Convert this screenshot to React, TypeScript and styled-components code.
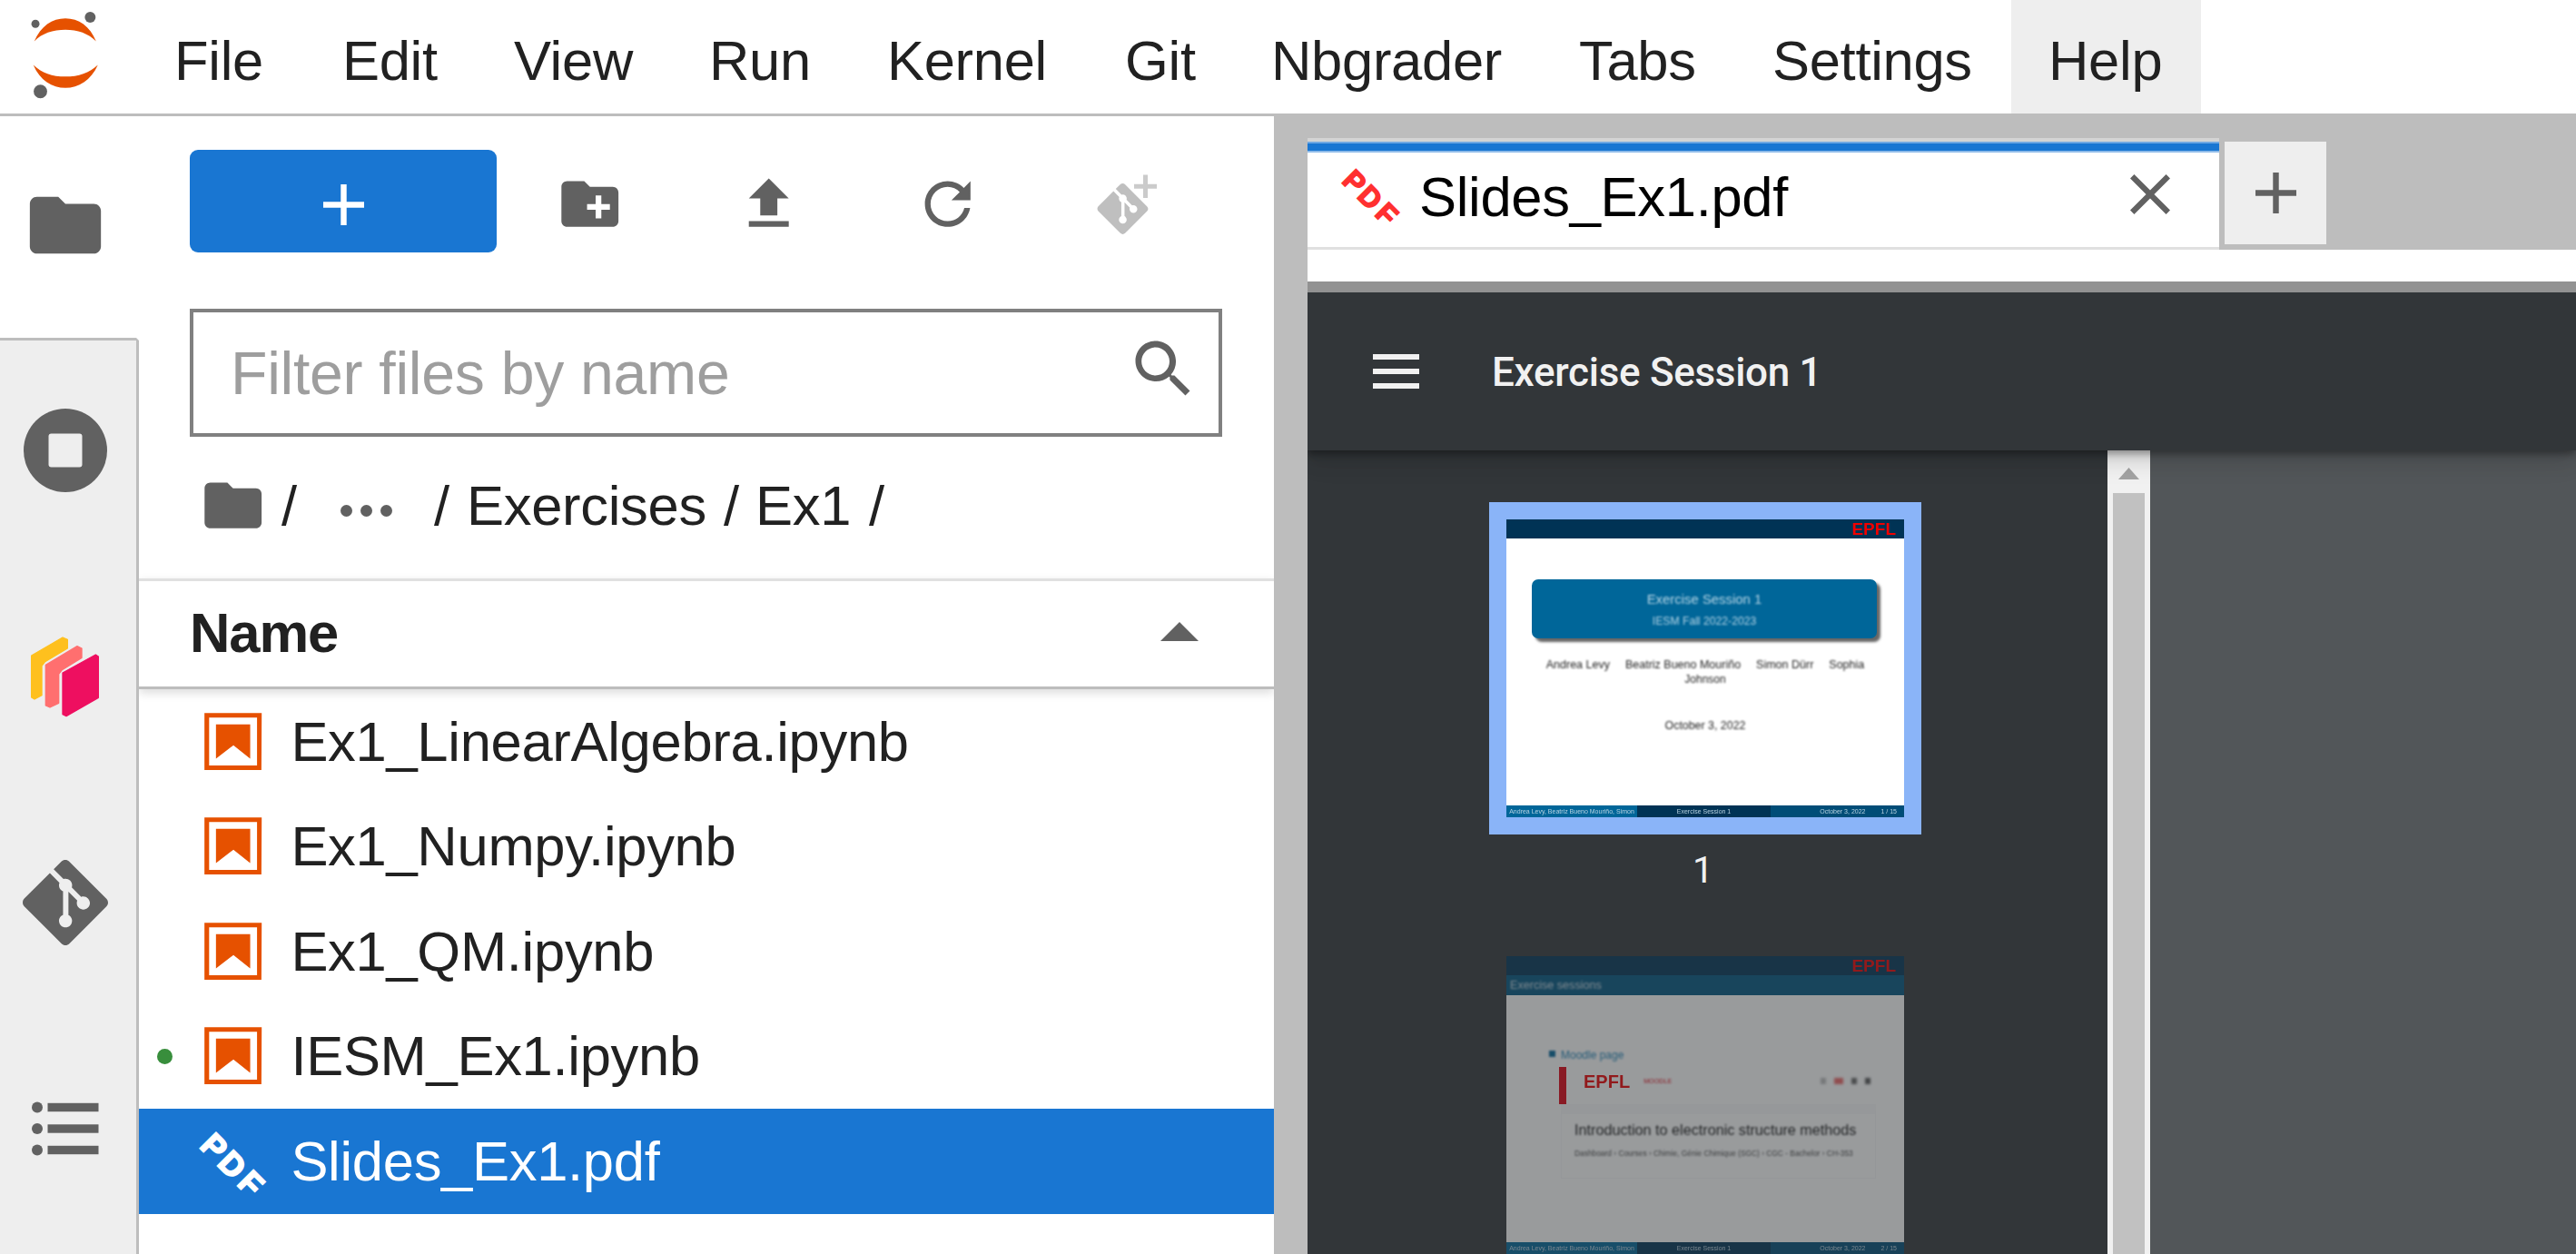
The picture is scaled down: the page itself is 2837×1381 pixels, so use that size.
import React from "react";
import styled, { createGlobalStyle, css } from "styled-components";

const GlobalStyle = createGlobalStyle`
  * { box-sizing: border-box; }
  html, body { margin: 0; padding: 0; overflow: hidden; background: #fff; }
`;

const ink = "#212121";
const iconGrey = "#616161";
const brand = "#1976d2";
const edge = "#bdbdbd";
const orange = "#e65100";

const Shell = styled.div`
  width: 2837px;
  height: 1381px;
  overflow: hidden;
  display: flex;
  flex-direction: column;
  background: #fff;
  color: ${ink};
  font-family: "Liberation Sans", Arial, sans-serif;
  font-size: 61.5px;
  letter-spacing: -0.3px;
  line-height: 1;
  white-space: nowrap;
`;

/* ---------- menu bar ---------- */

const MenuBar = styled.header`
  display: flex;
  flex: none;
  height: 128px;
  border-bottom: 3px solid ${edge};
`;

const Logo = styled.svg`
  flex: none;
  width: 151px;
  height: 125px;
`;

const MenuItem = styled.div<{ $width: number; $active?: boolean }>`
  display: flex;
  align-items: center;
  flex: none;
  width: ${(p) => p.$width}px;
  padding: 8px 0 0 41px;
  background: ${(p) => (p.$active ? "#eeeeee" : "transparent")};
`;

const Body = styled.div`
  display: flex;
  flex: 1;
  min-height: 0;
`;

/* ---------- activity bar ---------- */

const ActivityBar = styled.nav`
  display: flex;
  flex-direction: column;
  flex: none;
  width: 153px;
  background: #eeeeee;
`;

const Activity = styled.div<{ $current?: boolean }>`
  display: flex;
  align-items: center;
  justify-content: center;
  flex: none;
  height: 249px;
  padding: 0 7px 7px 0;
  border-right: 3px solid ${edge};
  ${(p) =>
    p.$current &&
    css`
      height: 247px;
      padding-bottom: 4px;
      background: #fff;
      border-right-color: #fff;
      border-bottom: 3px solid ${edge};
    `}
`;

const ActivityFill = styled.div`
  flex: 1;
  border-right: 3px solid ${edge};
`;

/* ---------- file browser ---------- */

const Browser = styled.section`
  display: flex;
  flex-direction: column;
  flex: none;
  width: 1250px;
  overflow: hidden;
  background: #fff;
`;

const Toolbar = styled.div`
  display: flex;
  align-items: center;
  flex: none;
  height: 113px;
  margin: 37px 0 0 56px;
`;

const NewButton = styled.div`
  display: flex;
  align-items: center;
  justify-content: center;
  width: 338px;
  height: 113px;
  margin-right: 4px;
  padding-top: 7px;
  border-radius: 9px;
  background: ${brand};
`;

const ToolSlot = styled.div`
  display: flex;
  justify-content: center;
  align-items: center;
  width: 197px;
  height: 113px;
  padding-top: 6px;
`;

const FilterBox = styled.div`
  display: flex;
  align-items: center;
  justify-content: space-between;
  flex: none;
  width: 1137px;
  height: 141px;
  margin: 62px 0 0 56px;
  padding: 0 24px 0 41px;
  border: 4px solid #808080;
  color: #9e9e9e;
  font-size: 66.2px;
`;

const FilterText = styled.span`
  padding-top: 2px;
`;

const SearchSlot = styled.span`
  display: flex;
  padding-bottom: 10px;
`;

const Crumbs = styled.div`
  display: flex;
  align-items: center;
  flex: none;
  height: 156px;
  padding: 0 0 5px 66px;
`;

const Crumb = styled.span<{ $width: number }>`
  width: ${(p) => p.$width}px;

  svg {
    display: block;
  }
`;

const Dots = styled.span`
  display: flex;
  gap: 9px;
  width: 103px;
  padding-top: 12px;
`;

const Dot = styled.i`
  width: 13px;
  height: 13px;
  border-radius: 50%;
  background: ${iconGrey};
`;

const ListHeader = styled.div`
  display: flex;
  align-items: center;
  justify-content: space-between;
  flex: none;
  height: 122px;
  padding: 0 83px 2px 56px;
  border-top: 3px solid #e0e0e0;
  border-bottom: 3px solid ${edge};
  box-shadow: 0 4px 10px rgba(0, 0, 0, 0.14);
  font-weight: 700;
  letter-spacing: -1.1px;
`;

const SortCaret = styled.svg`
  width: 42px;
  height: 21px;
  margin-bottom: 4px;
`;

const FileRow = styled.div<{ $selected?: boolean }>`
  display: flex;
  align-items: center;
  flex: none;
  height: 115.6px;
  padding: 0 0 1px 20px;
  background: ${(p) => (p.$selected ? brand : "transparent")};
  color: ${(p) => (p.$selected ? "#fff" : ink)};
`;

const RunningMark = styled.i<{ $on?: boolean }>`
  width: 17px;
  height: 17px;
  margin-right: 29px;
  border-radius: 50%;
  background: ${(p) => (p.$on ? "#388e3c" : "transparent")};
`;

const FileIcon = styled.span`
  display: flex;
  width: 75.4px;
  margin-right: 26px;
`;

/* ---------- document area ---------- */

const Dock = styled.main`
  display: flex;
  flex-direction: column;
  flex: 1;
  min-width: 0;
  padding: 24px 0 0 37px;
  background: ${edge};
`;

const TabStrip = styled.div`
  display: flex;
  flex: none;
  height: 123px;
`;

const Tab = styled.div`
  display: flex;
  align-items: center;
  width: 1004px;
  height: 123px;
  padding: 0 54px 9px 37px;
  border-top: 4px solid #d4d4d4;
  border-bottom: 3px solid #e0e0e0;
  background: linear-gradient(#6fa8e2 0 2px, ${brand} 2px 10px, #8fbce9 10px 12px, #fff 12px);
  color: #000;
`;

const TabTitle = styled.span`
  flex: 1;
  padding: 14px 0 0 20px;
`;

const TabIcon = styled.span`
  display: flex;
  padding-top: 9px;
`;

const CloseIcon = styled.svg`
  width: 44px;
  height: 44px;
  margin-top: 8px;
`;

const AddTab = styled.div`
  display: flex;
  align-items: center;
  justify-content: center;
  width: 112px;
  height: 113px;
  margin: 4px 0 0 6px;
  background: #eeeeee;
`;

const DocBar = styled.div`
  flex: none;
  height: 47px;
  border-bottom: 12px solid #929292;
  background: #fff;
`;

const PdfBar = styled.div`
  position: relative;
  z-index: 1;
  display: flex;
  align-items: center;
  flex: none;
  height: 174px;
  padding-left: 72px;
  background: #323639;
  color: #f1f1f1;
  font: 500 44px/1 Roboto, sans-serif;
  box-shadow: 0 14px 29px rgba(0, 0, 0, 0.06), 0 4px 7px rgba(0, 0, 0, 0.3),
    0 7px 22px rgba(0, 0, 0, 0.15);
  clip-path: inset(0 0 -60px 0);
`;

const PdfTitle = styled.span`
  padding-top: 2px;
`;

const Burger = styled.div`
  display: flex;
  flex-direction: column;
  gap: 9.5px;
  width: 51px;
  margin-right: 80px;
`;

const BurgerLine = styled.i`
  height: 6.5px;
  background: #f1f1f1;
`;

const Viewer = styled.div`
  display: flex;
  flex: 1;
  min-height: 0;
  overflow: hidden;
  background: #525659;
`;

const Thumbs = styled.aside`
  display: flex;
  flex-direction: column;
  flex: none;
  width: 881px;
  padding: 57px 0 0 200px;
  background: #323639;
  letter-spacing: 0;
`;

const ScrollTrack = styled.div`
  display: flex;
  flex-direction: column;
  align-items: center;
  flex: none;
  width: 47px;
  padding-top: 19px;
  background: #f1f1f1;
`;

const ScrollThumb = styled.div`
  flex: 1;
  width: 35px;
  margin-top: 15px;
  background: #c1c1c1;
`;

const Frame = styled.div<{ $selected?: boolean }>`
  flex: none;
  width: 476px;
  border: 19px solid ${(p) => (p.$selected ? "#8ab4f8" : "transparent")};
`;

const PageNumber = styled.div`
  flex: none;
  width: 476px;
  height: 115px;
  padding: 19px 5px 0 0;
  color: #f1f1f1;
  font: 400 41px/1 Roboto, sans-serif;
  text-align: center;
`;

/* ---------- slides ---------- */

const Slide = styled.div<{ $dim?: boolean }>`
  display: flex;
  flex-direction: column;
  width: 438px;
  height: 328px;
  overflow: hidden;
  background: #fff;
  opacity: ${(p) => (p.$dim ? 0.5 : 1)};
  font-family: "Liberation Sans", Arial, sans-serif;
`;

const SlideTop = styled.div`
  display: flex;
  justify-content: flex-end;
  align-items: center;
  flex: none;
  height: 21px;
  padding-right: 9px;
  background: #003355;
`;

const Epfl = styled.span<{ $size?: number }>`
  color: #f00000;
  font-size: ${(p) => p.$size ?? 19}px;
  font-weight: 700;
  line-height: 1;
  filter: blur(0.6px);
`;

const SoftText = styled.div<{ $size: number; $color: string; $indent?: number }>`
  margin-left: ${(p) => p.$indent ?? 0}px;
  color: ${(p) => p.$color};
  font-size: ${(p) => p.$size}px;
  line-height: 16px;
  filter: blur(1px);
`;

const TitleCard = styled.div`
  display: flex;
  flex-direction: column;
  align-items: center;
  flex: none;
  gap: 8px;
  width: 380px;
  height: 65px;
  margin: 45px 0 0 28px;
  padding-top: 14px;
  border-radius: 7px;
  background: #006699;
  box-shadow: 4px 4px 3px rgba(0, 0, 0, 0.6);
`;

const Authors = styled.div`
  display: flex;
  justify-content: center;
  gap: 17px;
  margin-top: 21px;
`;

const Centered = styled.div<{ $top: number }>`
  display: flex;
  justify-content: center;
  margin-top: ${(p) => p.$top}px;
`;

const SlideFoot = styled.div`
  display: flex;
  flex: none;
  height: 13px;
  margin-top: auto;
`;

const FootCell = styled.div<{ $width: number; $bg: string; $align?: string }>`
  display: flex;
  align-items: center;
  justify-content: ${(p) => p.$align ?? "center"};
  gap: 17px;
  width: ${(p) => p.$width}px;
  padding-right: ${(p) => (p.$align ? 8 : 0)}px;
  background: ${(p) => p.$bg};
`;

const FootText = styled.span`
  color: #b9d3e2;
  font-size: 7px;
  line-height: 12px;
  filter: blur(0.7px);
`;

const SlideHeading = styled.div`
  flex: none;
  height: 22px;
  padding: 3px 0 0 4px;
  background: #005580;
`;

const Bullet = styled.div`
  display: flex;
  align-items: center;
  gap: 6px;
  margin: 58px 0 0 47px;
`;

const BulletMark = styled.i`
  width: 7px;
  height: 7px;
  margin-bottom: 4px;
  background: #006699;
  filter: blur(1px);
`;

const Banner = styled.div`
  display: flex;
  align-items: center;
  flex: none;
  height: 41px;
  margin: 5px 31px 0 58px;
  padding: 0 6px 10px 19px;
  border-left: 8px solid #e00010;
`;

const BannerLinks = styled.div`
  display: flex;
  gap: 9px;
  margin-left: auto;
`;

const BannerMark = styled.i<{ $bg: string; $width: number }>`
  width: ${(p) => p.$width}px;
  height: 7px;
  background: ${(p) => p.$bg};
  filter: blur(1.5px);
`;

const Course = styled.div`
  display: flex;
  flex-direction: column;
  flex: none;
  gap: 10px;
  height: 82px;
  margin: 0 31px 0 60px;
  padding: 9px 0 0 14px;
  border: 1px solid #f8f8f8;
  border-top: 11px solid #fafafa;
`;

/* ---------- icons ---------- */

const Folder = ({ size, plus }: { size: number; plus?: boolean }) => (
  <svg width={size} height={size} viewBox="0 0 24 24" fill={iconGrey}>
    {plus ? (
      <path d="M20 6h-8l-2-2H4c-1.11 0-1.99.89-1.99 2L2 18c0 1.11.89 2 2 2h16c1.11 0 2-.89 2-2V8c0-1.11-.89-2-2-2zm-1 8h-3v3h-2v-3h-3v-2h3V9h2v3h3v2z" />
    ) : (
      <path d="M10 4H4c-1.1 0-1.99.9-1.99 2L2 18c0 1.1.9 2 2 2h16c1.1 0 2-.9 2-2V8c0-1.1-.9-2-2-2h-8l-2-2z" />
    )}
  </svg>
);

const Plus = ({ color }: { color: string }) => (
  <svg width="45" height="45" viewBox="0 0 14 14" fill={color}>
    <path d="M14 8H8v6H6V8H0V6h6V0h2v6h6z" />
  </svg>
);

const gitPath =
  "M23.546 10.93L13.067.452c-.604-.603-1.582-.603-2.188 0L8.708 2.627l2.76 2.76c.645-.215 1.379-.07 1.889.441.516.515.658 1.258.438 1.9l2.658 2.66c.645-.223 1.387-.078 1.9.435.721.72.721 1.884 0 2.604-.719.719-1.881.719-2.6 0-.539-.541-.674-1.337-.404-1.996L12.86 8.955v6.525c.176.086.342.203.488.348.713.721.713 1.883 0 2.6-.719.721-1.889.721-2.609 0-.719-.719-.719-1.879 0-2.598.182-.18.387-.316.605-.406V8.835c-.217-.091-.424-.222-.6-.401-.545-.545-.676-1.342-.396-2.009L7.636 3.7.45 10.881c-.6.605-.6 1.584 0 2.189l10.48 10.477c.604.604 1.582.604 2.186 0l10.43-10.43c.605-.603.605-1.582 0-2.187";

const NotebookIcon = () => (
  <svg width="75.4" height="75.4" viewBox="0 0 22 22" fill={orange}>
    <path d="M18.7 3.3v15.4H3.3V3.3h15.4m1.5-1.5H1.8v18.3h18.3l.1-18.3z" />
    <path d="M16.5 16.5l-5.4-4.3-5.6 4.3v-11h11z" />
  </svg>
);

const PdfMark = styled.svg`
  overflow: visible;
`;

const PdfIcon = ({ size, color }: { size: number; color: string }) => (
  <PdfMark width={size} height={size} viewBox="0 0 76 76">
    <g
      transform="translate(37.500 38) rotate(45)"
      fill={color}
      stroke={color}
      strokeWidth="2"
      fontFamily="Liberation Sans, Arial, sans-serif"
      fontWeight="700"
      fontSize="36"
      letterSpacing="0"
    >
      <text x="-38" y="15.500">P</text>
      <text x="-10.500" y="15.500">D</text>
      <text x="21" y="15.500">F</text>
    </g>
  </PdfMark>
);

const menus: [string, number][] = [
  ["File", 184],
  ["Edit", 189],
  ["View", 215],
  ["Run", 196],
  ["Kernel", 262],
  ["Git", 161],
  ["Nbgrader", 339],
  ["Tabs", 213],
  ["Settings", 304],
];

const notebooks = [
  { name: "Ex1_LinearAlgebra.ipynb", running: false },
  { name: "Ex1_Numpy.ipynb", running: false },
  { name: "Ex1_QM.ipynb", running: false },
  { name: "IESM_Ex1.ipynb", running: true },
];

const SlideFooter = ({ page }: { page: number }) => (
  <SlideFoot>
    <FootCell $width={144} $bg="#006699">
      <FootText>Andrea Levy, Beatriz Bueno Mouriño, Simon</FootText>
    </FootCell>
    <FootCell $width={147} $bg="#003355">
      <FootText>Exercise Session 1</FootText>
    </FootCell>
    <FootCell $width={147} $bg="#004d77" $align="flex-end">
      <FootText>October 3, 2022</FootText>
      <FootText>{page} / 15</FootText>
    </FootCell>
  </SlideFoot>
);

export default function App() {
  return (
    <Shell>
      <GlobalStyle />
      <MenuBar>
        <Logo viewBox="0 0 152 125">
          <g fill={orange}>
            <path d="M38 45.500C45 28.500 58 20 72.500 20S100 28.500 106.500 45.500C98 36.500 86 32.500 72.500 32.500S46 36.500 38 45.500Z" />
            <path d="M37 71.500C46 80.500 58 84.500 72.500 84.500S99 80.500 108.500 71.500C101 88.500 87 97 72.500 97S44 88.500 37 71.500Z" />
          </g>
          <g fill={iconGrey}>
            <circle cx="100" cy="18.700" r="6" />
            <circle cx="39.300" cy="26" r="4.500" />
            <circle cx="44.800" cy="101" r="7.500" />
          </g>
        </Logo>
        {menus.map(([label, width], i) => (
          <MenuItem key={label} $width={i === 0 ? width + 1 : width}>
            {label}
          </MenuItem>
        ))}
        <MenuItem $width={209} $active>
          Help
        </MenuItem>
      </MenuBar>

      <Body>
        <ActivityBar>
          <Activity $current>
            <Folder size={94} />
          </Activity>
          <Activity>
            <svg width="92" height="92" viewBox="0 0 92 92">
              <circle cx="46" cy="46" r="46" fill={iconGrey} />
              <rect x="27.500" y="27.500" width="37" height="37" rx="3" fill="#eee" />
            </svg>
          </Activity>
          <Activity>
            <svg width="77" height="90" viewBox="100 1024 231 270" strokeWidth="4" strokeLinejoin="round">
              <path fill="#fec01e" stroke="#fec01e" d="M105 1090L208 1030L224 1037V1066L150 1110L139 1124V1221L115 1234L105 1228Z" />
              <path fill="#ff6f6f" stroke="#ff6f6f" d="M152 1121L256 1059L271 1066V1097L205 1138L195 1151V1247L166 1261L152 1255Z" />
              <path fill="#ee0f60" stroke="#ee0f60" d="M208 1147L317 1087L326 1093V1229L220 1290L208 1284Z" />
            </svg>
          </Activity>
          <Activity>
            <svg width="94" height="94" viewBox="0 0 24 24" fill={iconGrey}>
              <path d={gitPath} />
            </svg>
          </Activity>
          <Activity>
            <svg width="74" height="62" viewBox="0 0 74 62" fill={iconGrey}>
              {[7.5, 31, 54.5].map((y) => (
                <g key={y}>
                  <circle cx="6" cy={y} r="6" />
                  <rect x="17.500" y={y - 4.7} width="56" height="9.400" />
                </g>
              ))}
            </svg>
          </Activity>
          <ActivityFill />
        </ActivityBar>

        <Browser>
          <Toolbar>
            <NewButton>
              <Plus color="#fff" />
            </NewButton>
            <ToolSlot>
              <Folder size={75.4} plus />
            </ToolSlot>
            <ToolSlot>
              <svg width="75.400" height="75.400" viewBox="0 0 24 24" fill={iconGrey}>
                <path d="M5 20h14v-2H5v2zM5 10h4v6h6v-6h4l-7-7-7 7z" />
              </svg>
            </ToolSlot>
            <ToolSlot>
              <svg width="75.400" height="75.400" viewBox="0 0 18 18" fill={iconGrey}>
                <path d="M9 13.5c-2.49 0-4.5-2.01-4.5-4.5S6.51 4.5 9 4.5c1.24 0 2.36.52 3.17 1.33L10 8h5V3l-1.76 1.76C12.15 3.68 10.66 3 9 3 5.69 3 3.01 5.69 3.01 9S5.69 15 9 15c2.97 0 5.43-2.16 5.9-5h-1.52c-.46 2-2.24 3.5-4.38 3.5z" />
              </svg>
            </ToolSlot>
            <ToolSlot>
              <svg width="66" height="68" viewBox="0 0 66 68">
                <path
                  fill="#bfbfbf"
                  transform="translate(0.500 11) scale(2.330)"
                  d={gitPath}
                />
                <path fill="#cbcbcb" d="M51 1.500h5v10.200h10v5h-10v10.200h-5v-10.200h-10v-5h10z" />
              </svg>
            </ToolSlot>
          </Toolbar>

          <FilterBox>
            <FilterText>Filter files by name</FilterText>
            <SearchSlot>
              <svg width="75" height="75" viewBox="0 0 18 18" fill={iconGrey}>
                <path d="M12.1 10.9h-.7l-.2-.2c.8-.9 1.3-2.2 1.3-3.5 0-3-2.4-5.4-5.4-5.4S1.800 4.200 1.800 7.100s2.400 5.400 5.400 5.400c1.300 0 2.500-.5 3.500-1.300l.2.2v.7l4.100 4.100 1.200-1.200-4.100-4.100zm-5 0c-2.100 0-3.700-1.700-3.700-3.700s1.700-3.700 3.700-3.700 3.700 1.700 3.700 3.700-1.600 3.700-3.700 3.700z" />
              </svg>
            </SearchSlot>
          </FilterBox>

          <Crumbs>
            <Crumb $width={91}>
              <Folder size={75.4} />
            </Crumb>
            <Crumb $width={65}>/</Crumb>
            <Dots>
              <Dot />
              <Dot />
              <Dot />
            </Dots>
            <Crumb $width={36}>/</Crumb>
            <Crumb $width={283}>Exercises</Crumb>
            <Crumb $width={35}>/</Crumb>
            <Crumb $width={125}>Ex1</Crumb>
            <Crumb $width={35}>/</Crumb>
          </Crumbs>

          <ListHeader>
            <span>Name</span>
            <SortCaret viewBox="0 0 42 21">
              <path d="M0 21L21 0l21 21z" fill={iconGrey} />
            </SortCaret>
          </ListHeader>

          {notebooks.map((f) => (
            <FileRow key={f.name}>
              <RunningMark $on={f.running} />
              <FileIcon>
                <NotebookIcon />
              </FileIcon>
              {f.name}
            </FileRow>
          ))}
          <FileRow $selected>
            <RunningMark />
            <FileIcon>
              <PdfIcon size={75.4} color="#fff" />
            </FileIcon>
            Slides_Ex1.pdf
          </FileRow>
        </Browser>

        <Dock>
          <TabStrip>
            <Tab>
              <TabIcon>
                <PdfIcon size={66} color="#ff3030" />
              </TabIcon>
              <TabTitle>Slides_Ex1.pdf</TabTitle>
              <CloseIcon viewBox="0 0 14 14" fill={iconGrey}>
                <path d="M14 1.410L12.590 0 7 5.590 1.410 0 0 1.410 5.590 7 0 12.590 1.410 14 7 8.410 12.590 14 14 12.590 8.410 7z" />
              </CloseIcon>
            </Tab>
            <AddTab>
              <Plus color={iconGrey} />
            </AddTab>
          </TabStrip>
          <DocBar />
          <PdfBar>
            <Burger>
              <BurgerLine />
              <BurgerLine />
              <BurgerLine />
            </Burger>
            <PdfTitle>Exercise Session 1</PdfTitle>
          </PdfBar>
          <Viewer>
            <Thumbs>
              <Frame $selected>
                <Slide>
                  <SlideTop>
                    <Epfl>EPFL</Epfl>
                  </SlideTop>
                  <TitleCard>
                    <SoftText $size={14.9} $color="#b5d5e5">Exercise Session 1</SoftText>
                    <SoftText $size={12.2} $color="#b0d2e4">IESM Fall 2022-2023</SoftText>
                  </TitleCard>
                  <Authors>
                    {["Andrea Levy", "Beatriz Bueno Mouriño", "Simon Dürr", "Sophia"].map((a) => (
                      <SoftText key={a} $size={12.5} $color="#222">{a}</SoftText>
                    ))}
                  </Authors>
                  <Centered $top={0}>
                    <SoftText $size={12} $color="#222">Johnson</SoftText>
                  </Centered>
                  <Centered $top={35}>
                    <SoftText $size={12.4} $color="#222">October 3, 2022</SoftText>
                  </Centered>
                  <SlideFooter page={1} />
                </Slide>
              </Frame>
              <PageNumber>1</PageNumber>
              <Frame>
                <Slide $dim>
                  <SlideTop>
                    <Epfl>EPFL</Epfl>
                  </SlideTop>
                  <SlideHeading>
                    <SoftText $size={12.6} $color="#c5d9e4">Exercise sessions</SoftText>
                  </SlideHeading>
                  <Bullet>
                    <BulletMark />
                    <SoftText $size={12} $color="#1a7fb5">Moodle page</SoftText>
                  </Bullet>
                  <Banner>
                    <Epfl $size={20}>EPFL</Epfl>
                    <SoftText $size={7.2} $color="#e00010" $indent={15}>MOODLE</SoftText>
                    <BannerLinks>
                      <BannerMark $width={6} $bg="#bbb" />
                      <BannerMark $width={10} $bg="#e66" />
                      <BannerMark $width={6} $bg="#666" />
                      <BannerMark $width={6} $bg="#555" />
                    </BannerLinks>
                  </Banner>
                  <Course>
                    <SoftText $size={16.2} $color="#111">Introduction to electronic structure methods</SoftText>
                    <SoftText $size={8.4} $color="#444">
                      Dashboard › Courses › Chimie, Génie Chimique (SGC) › CGC - Bachelor › CH-353
                    </SoftText>
                  </Course>
                  <SlideFooter page={2} />
                </Slide>
              </Frame>
            </Thumbs>
            <ScrollTrack>
              <svg width="23" height="13" viewBox="0 0 23 13">
                <path d="M0 13L11.500 0 23 13z" fill="#a3a3a3" />
              </svg>
              <ScrollThumb />
            </ScrollTrack>
          </Viewer>
        </Dock>
      </Body>
    </Shell>
  );
}
